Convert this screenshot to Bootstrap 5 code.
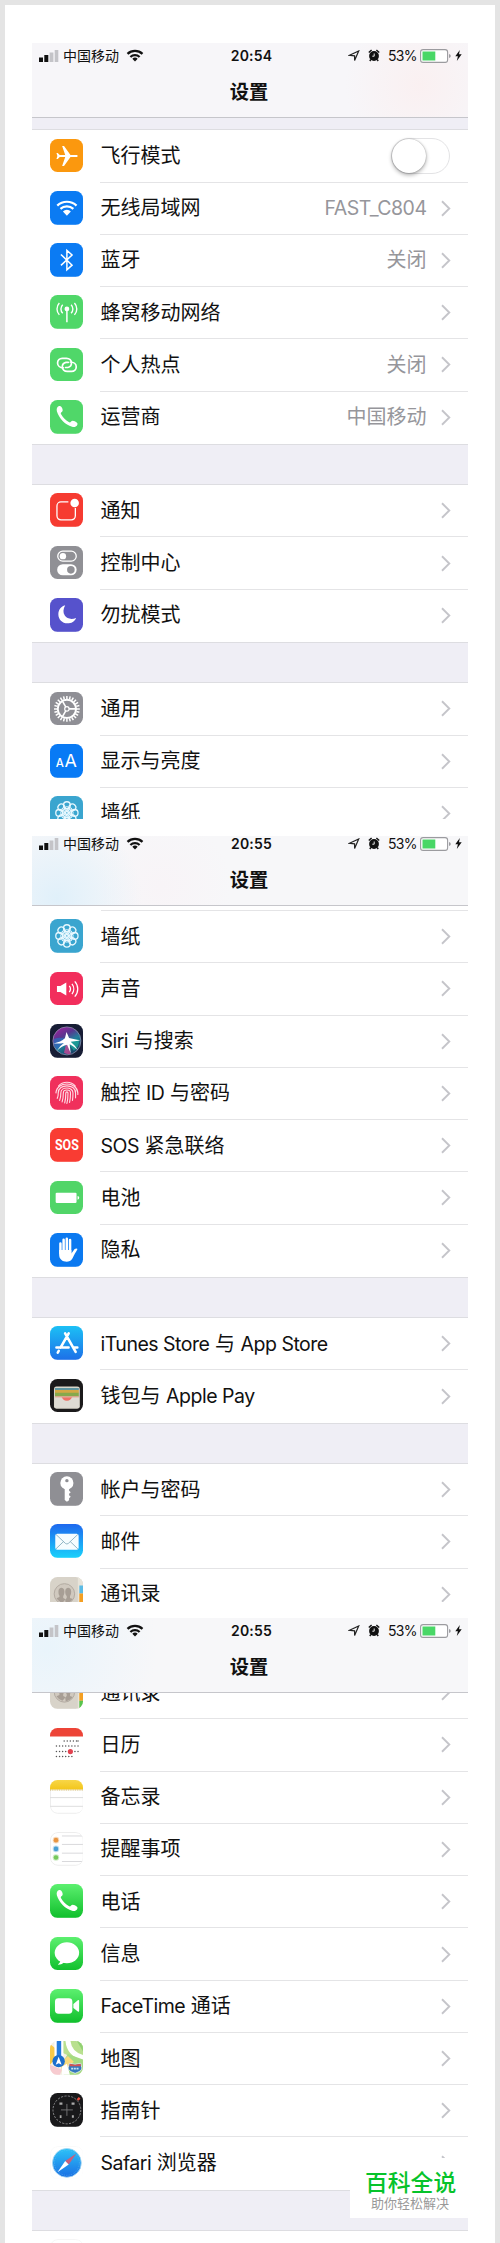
<!DOCTYPE html>
<html lang="zh-CN">
  <head>
    <meta charset="UTF-8" />
    <meta name="viewport" content="width=device-width, initial-scale=1.0" />
    <title>设置</title>
    <link
      href="https://cdn.jsdelivr.net/npm/bootstrap@5.3.0/dist/css/bootstrap.min.css"
      rel="stylesheet"
    />
    <style>
      body {
        font-family: "Inter", "Noto Sans CJK SC", sans-serif;
        color: #111;
        background-color: #fff;
      }
      .page-frame {
        height: 2243px;
        border: 5px solid #e4e4e4;
        border-bottom: 0;
        padding: 38px 27px 0;
      }
      .screen {
        flex: none;
        width: 436px;
        background-color: #fff;
      }
      .screen-1 {
        height: 776px;
        margin-bottom: 17px;
      }
      .screen-2 {
        height: 766px;
        margin-bottom: 16px;
      }
      .screen-3 {
        height: 625px;
      }

      /* header */
      .top-bar {
        flex: none;
        height: 75px;
        border-bottom: 1px solid #c6c6cb;
        z-index: 1;
      }
      .screen-1 .top-bar {
        background: radial-gradient(circle at 388px 42px, #faf0f1 0, rgba(247, 246, 249, 0) 75px), #f7f6f9;
      }
      .screen-2 .top-bar {
        height: 70px;
        background: radial-gradient(circle at 25px 62px, #e0f0fa 0, rgba(247, 247, 249, 0) 85px),
          radial-gradient(circle at 130px 50px, #f8f4f7 0, rgba(247, 247, 249, 0) 70px), #f7f7f9;
      }
      .screen-3 .top-bar {
        background: radial-gradient(circle at 15px 30px, #e9f4fb 0, rgba(247, 247, 249, 0) 110px), #f7f7f9;
      }
      .status-bar {
        height: 25px;
        padding: 0 6px 0 7px;
        font-size: 14px;
        line-height: 25px;
      }
      .screen-2 .status-bar {
        height: 20px;
        line-height: 15px;
      }
      .screen-2 .status-bar > div {
        height: 15px;
      }
      .status-bar > div {
        height: 25px;
      }
      .status-side {
        width: 160px;
      }
      .carrier {
        margin: 0 7px 0 4px;
      }
      .clock {
        font-weight: 600;
        font-size: 14px;
        letter-spacing: 0.2px;
        padding-left: 2px;
      }
      .percent {
        margin: 0 3px 0 8px;
        font-size: 14px;
        letter-spacing: -0.6px;
      }
      .bar-title {
        padding-right: 2px;
        font-size: 19.3px;
        font-weight: 600;
        line-height: 48px;
      }

      /* list */
      .gap-band {
        flex: none;
        height: 41.3px;
        background-color: #efeef5;
        border: solid #dddde1;
        border-width: 1px 0;
      }
      .gap-first {
        height: 12.3px;
        border-top: 0;
      }
      .gap-line {
        flex: none;
        height: 5px;
        margin-left: 69px;
        border-bottom: 1px solid #e4e4e6;
      }
      .group-list {
        flex: none;
      }
      .setting-row {
        height: 52.28px;
        padding-left: 17.7px;
      }
      .app-icon {
        flex: none;
        width: 33.8px;
        height: 33.8px;
        margin: -2px 17px 0 0;
        border-radius: 7.5px;
        overflow: hidden;
      }
      .row-body {
        height: 100%;
        padding-right: 17.5px;
        font-size: 20px;
        white-space: pre;
        border-bottom: 1px solid #e4e4e6;
      }
      .group-list .setting-row:last-child .row-body {
        border-bottom-color: transparent;
      }
      .row-value {
        color: #96969b;
        margin-right: 14px;
      }
      .latin {
        font-size: 19.5px;
        letter-spacing: -0.5px;
      }
      .toggle-track {
        width: 59px;
        height: 36px;
        margin-right: 1px;
        border: 1.5px solid #e3e3e5;
      }
      .toggle-knob {
        width: 34px;
        height: 34px;
        background-color: #fff;
        box-shadow: 0 2px 4px rgba(0, 0, 0, 0.32), 0 0 1.5px rgba(0, 0, 0, 0.35);
      }
      .tail-row {
        height: 12px;
      }
      .faded {
        opacity: 0.18;
      }

      /* site stamp over the last rows */
      .stamp {
        right: 32px;
        top: 2158px;
        width: 118px;
        height: 60px;
        padding: 11px 0 0 15px;
        background-color: #fff;
        z-index: 2;
      }
      .stamp-name {
        font-size: 22.8px;
        font-weight: 500;
        line-height: 27px;
        color: #06c32b;
      }
      .stamp-note {
        padding-left: 6px;
        font-size: 13px;
        line-height: 15px;
        color: #999;
      }
    </style>
  </head>
  <body>
    <svg width="0" height="0" class="position-absolute">
      <defs>
        <linearGradient id="gGreen" x2="0" y2="1"><stop stop-color="#5cf06f" /><stop offset="1" stop-color="#10bf2c" /></linearGradient>
        <linearGradient id="gStore" x2="0" y2="1"><stop stop-color="#1cc0f5" /><stop offset="1" stop-color="#1d70e8" /></linearGradient>
        <linearGradient id="gMail" x2="0" y2="1"><stop stop-color="#1e68ee" /><stop offset="1" stop-color="#1ad1fb" /></linearGradient>
        <linearGradient id="gSafari" x2="0" y2="1"><stop stop-color="#2cc3f8" /><stop offset="1" stop-color="#1a6fe4" /></linearGradient>
        <linearGradient id="gNotes" x2="0" y2="1"><stop stop-color="#f8d648" /><stop offset="1" stop-color="#f3c61b" /></linearGradient>
        <linearGradient id="gSiri" x2=".6" y2="1"><stop stop-color="#b01da0" /><stop offset=".4" stop-color="#5a3590" /><stop offset=".65" stop-color="#217f9b" /><stop offset="1" stop-color="#184267" /></linearGradient>
      </defs>
    </svg>

    <div class="page-frame d-flex flex-column" id="page"></div>

    <div class="stamp position-absolute">
      <div class="stamp-name">百科全说</div>
      <div class="stamp-note">助你轻松解决</div>
    </div>

    <script src="https://cdn.jsdelivr.net/npm/bootstrap@5.3.0/dist/js/bootstrap.bundle.min.js"></script>
    <script>
      const handset =
        '<path fill="#fff" d="M8.6 6.4c1.8-.9 3 .1 3.8 2.2.8 2.2.3 3.1-1.2 4.1-.6.5-.4 1.1.1 2 1.9 3.4 4.3 5.7 7.6 7.5 1 .5 1.5.5 2.1-.3.9-1.3 2.1-1.5 4-.5 2.4 1.2 3.3 2.3 2.3 3.9-1 1.6-2.9 2.1-5.1 1.5C15.400 25 8.900 18.200 6.900 11.200c-.5-2 .1-4 1.700-4.800z"/>';

      // petals and gear teeth are generated around the centre of the tile
      function around(count, shape) {
        let out = "";
        for (let i = 0; i < count; i++) {
          out += `<g transform="rotate(${(360 / count) * i} 17 17)">${shape}</g>`;
        }
        return out;
      }

      function dots(cols, y) {
        return cols.map((c) => `<circle cx="${6.5 + c * 3.1}" cy="${y}" r=".75"/>`).join("");
      }

      // name: [tile colour, drawing, outline for the white tiles]
      const icons = {
        plane: ["#fb980e", '<path fill="#fff" d="M6.500 14.200h1.300l2 1.900h5.500L12.200 7h1.900l6.500 9.100h5.600c2.300 0 2.300 2 0 2h-5.600l-6.500 9.100h-1.900l3.100-9.100H9.800l-2 1.900H6.500l.9-2.900z"/>'],
        wifi: ["#0b7bf3", '<g fill="none" stroke="#fff" stroke-width="2.200"><path d="M7.300 14.700a14 14 0 0 1 19.400 0M10.500 18a9.400 9.400 0 0 1 13 0"/></g><path fill="#fff" d="M13 20.500a5.700 5.700 0 0 1 8 0l-4 4.300z"/>'],
        bluetooth: ["#0b7bf3", '<path fill="none" stroke="#fff" stroke-width="1.500" d="M11 11.500l11.200 10.800-5.200 4.700V7.500l5.200 4.600L11 22.500"/>'],
        cell: ["#50d769", '<circle cx="17" cy="14" r="2.400" fill="#fff"/><path d="M17 14v13.500" stroke="#fff" stroke-width="1.500"/><g fill="none" stroke="#fff" stroke-width="1.400"><path d="M12.800 18.300a6 6 0 0 1 0-8.600M21.200 18.300a6 6 0 0 0 0-8.600M9.400 20a8.800 8.800 0 0 1 0-12M24.600 20a8.800 8.800 0 0 0 0-12"/></g>'],
        hotspot: ["#50d769", '<g fill="none" stroke="#fff" stroke-width="1.700" stroke-linecap="round"><path d="M13.300 19.900c-3.200 0-5.700-2-5.700-4.800 0-2.600 2-4.700 4.700-4.700h4.300c3 0 5 2 5 4.700 0 2.300-1.500 4-3.700 4.500h-2.300"/><path d="M20.500 14.100c3.400 0 5.900 2 5.900 4.800 0 2.600-2 4.700-4.700 4.700h-4.300c-3 0-5-2-5-4.700 0-2.300 1.500-4 3.700-4.500h2.300"/></g>'],
        carrier: ["#50d769", handset],
        notice: ["#f63b31", '<path fill="none" stroke="#fff" stroke-width="1.300" d="M18.500 9H11a4 4 0 0 0-4 4v10a4 4 0 0 0 4 4h10.500a4 4 0 0 0 4-4v-8"/><circle cx="24.800" cy="10" r="4.300" fill="#fff"/>'],
        control: ["#909095", '<rect x="7.800" y="5.200" width="18.600" height="10" rx="5" fill="none" stroke="#fff" stroke-width="1.300"/><circle cx="13" cy="10.200" r="3.200" fill="#fff"/><rect x="7.200" y="18.300" width="19.600" height="11.200" rx="5.600" fill="#fff"/><circle cx="21" cy="24" r="3.800" fill="#909095"/>'],
        moon: ["#5652cc", '<path fill="#fff" d="M15.300 7.300c-4.300 1.200-6.900 4.800-6.900 9 0 5.200 3.900 9.200 9.100 9.200 4 0 7.400-2.100 8.800-5.500-4.800 2-9.200.9-11.400-2.300-2-3-1.700-6.800.4-10.400z"/>'],
        gear: ["#8f8f95", around(24, '<path d="M17 4v3.200" stroke="#fff" stroke-width="1.500"/>') + '<circle cx="17" cy="17" r="9.200" fill="none" stroke="#fff" stroke-width="2"/>' + around(3, '<path d="M19 17h7.500" stroke="#fff" stroke-width="1.600"/>') + '<circle cx="17" cy="17" r="2.200" fill="none" stroke="#fff" stroke-width="1.200"/>'],
        display: ["#087af5", '<g fill="#fff" font-family="Inter, sans-serif"><text x="5.700" y="23" font-size="11.500" font-weight="500">A</text><text x="14.700" y="23" font-size="18">A</text></g>'],
        wallpaper: ["#3aa5cf", '<g fill="none" stroke="#e8f8ff" stroke-width="1.300">' + around(8, '<circle cx="17" cy="9.200" r="3.400"/><ellipse cx="17" cy="13.200" rx="2" ry="2.500" stroke-width="1"/>') + '<circle cx="17" cy="17" r="1.500"/></g>'],
        sound: ["#f22e5c", '<path fill="#fff" d="M7 14.200h3.400l6-3.700v13.200l-6-3.700H7z"/><g fill="none" stroke="#fff" stroke-width="1.300"><path d="M19.400 14a5 5 0 0 1 0 6.200M22.100 11.900a8.500 8.500 0 0 1 0 10.400M24.900 9.400c4 4.200 4 11.200 0 15.400"/></g>'],
        siri: ["#171d35", '<circle cx="17" cy="17" r="14.100" fill="url(#gSiri)" stroke="#9b9cb8" stroke-width=".7"/><path d="M4 15q9-3 13 2L7 26q-4-5-3-11z" fill="#2c6fc0" opacity=".7"/><path d="M17 17l12-2q1 8-5 12z" fill="#1ba999" opacity=".75"/><path d="M17 17l4 13q-4 1-7-1z" fill="#e0469d" opacity=".7"/><path fill="#fff" d="M3.500 19.500Q11 18 15 14.300L16.600 8l2.600 6.200 11.300 2.300-9.700 1.300q4.200 3.200 7.200 8.700-4.800-4.800-8.200-6.200l1 9.200-3.600-8.500q-5.200 1-10.200 6 3.200-5.700 7-8-4.500 1-10.500.5z"/>'],
        touch: ["#f0305c", '<g fill="none" stroke="#ffdbe4" stroke-width="1.150" stroke-linecap="round"><path d="M8.500 10.200c4.200-5.200 12.800-5.200 17 0"/><path d="M6 17c.7-12 21.300-12 22 0v1.500"/><path d="M7.300 22.500c.8-1.700 1-3.500 1-5.500 0-9.500 17.400-9.500 17.400 0v5"/><path d="M9.700 24.500c1-2.500 1.200-4.800 1.200-7.500 0-6.600 12.200-6.600 12.200 0 0 3-.1 5-.5 7.500"/><path d="M12.200 26c1-3 1.200-5.500 1.200-9 0-3.900 7.200-3.900 7.200 0 0 4-.2 6.500-.9 9.500"/><path d="M14.800 27c1-3.500 1.100-6.500 1.100-10 0-1.300 2.200-1.300 2.200 0 0 4-.2 7-1.100 10.500"/></g>'],
        sos: ["#f93c33", '<text x="17" y="21.900" text-anchor="middle" fill="#fff" font-family="Roboto, sans-serif" font-size="14.500" font-weight="700" textLength="24" lengthAdjust="spacingAndGlyphs">SOS</text>'],
        battery: ["#51d568", '<rect x="5.700" y="11.700" width="21" height="10.400" rx="1.200" fill="#fff"/><path fill="#fff" d="M27.700 15q1.700.3 1.700 1.900t-1.700 1.900z"/>'],
        hand: ["#0b79f0", '<g stroke="#fff" stroke-width="2.500" stroke-linecap="round"><path d="M10.500 10.500V20M13.700 6.800V18M16.900 5.700V18M20.200 7V20"/></g><path fill="#fff" d="M9.200 17.200h12.300v3.300l3.300-4.300c1-1 2.700-.8 2.800-.2.100.6-2.500 4.200-3.700 7-1.500 3.900-3.300 6-7 6-4.500 0-7.700-2.700-7.700-7z"/>'],
        store: ["url(#gStore)", '<g stroke="#fff" stroke-width="2.600" stroke-linecap="round"><path d="M15.200 7.500L25.800 26M18.800 7.500L10.600 21.700M8.800 25l-1 1.700M6.500 21.700h12.200M23.500 21.700h4"/></g>'],
        wallet: ["#1b1a1b", '<rect x="4" y="7.500" width="26" height="22.500" rx="2.500" fill="#d9d6ca"/><path d="M5 9h24v2H5z" fill="#5f95a0"/><path d="M5 11h24v3H5z" fill="#d3a845"/><path d="M5 13.800h24v3.700H5z" fill="#86a94c"/><path d="M5 17.300h24v1.500H5z" fill="#e3a08c"/><path d="M4.700 18.600h6.500c2 0 2.500 3.400 5.800 3.400s3.800-3.400 5.800-3.400h6.500V29H4.700z" fill="#dfdcd4"/><path d="M12 18.600h10c-1 1.500-2 3.400-5 3.400s-4-1.900-5-3.400z" fill="#f07166"/>'],
        key: ["#8f8f94", '<circle cx="17" cy="11" r="6.600" fill="#fff"/><circle cx="17" cy="8.700" r="1.700" fill="#8f8f94"/><path fill="#fff" d="M14.800 16h4.400v2.800l1.700 1.500-1.700 1.500v1.500l1.700 1.500-1.700 1.700v1.800L17 30l-2.200-1.800z"/>'],
        mail: ["url(#gMail)", '<rect x="5.300" y="9.800" width="23.500" height="16" rx="2" fill="#f6fdff"/><path fill="none" stroke="#86aebf" stroke-width=".9" d="M6 10.500l9.500 9q1.500 1.300 3 0l9.500-9M6 25l7.800-7.500M28 25l-7.800-7.500"/>'],
        contacts: ["#d8d3c9", '<path fill="#e8e4da" d="M28 0h6v34h-6z"/><path fill="#5cbbe5" d="M29.500 8.500H34v8h-4.500z"/><path fill="#f49f22" d="M29.500 16.500H34v9.500h-4.500z"/><path fill="#58c44d" d="M29.500 26H34v8h-4.500z"/><circle cx="14.500" cy="17" r="10.300" fill="#d0c9bf" stroke="#b2aaa1"/><path fill="#a79e95" d="M8.500 14.500c0-5 6-5 6 0 0 2.200-.5 3.800-1.200 4.500v2.200l2.400 1.200-3.200 3.500q-3.500-.7-6-4.500l3-1.200v-1.500c-.7-.8-1-2.200-1-4.200z"/><path fill="#a79e95" d="M15.300 14.500c0-5 6-5 6 0 0 2.200-.5 3.800-1.200 4.500v2.200l2.700 1q-3 4-7 4.200l-.5-3.500 1.500-1.700v-2.200c-1-.8-1.500-2.400-1.500-4.500z"/>'],
        calendar: ["#fff", '<path fill="#ed4437" d="M0 0h34v8.500H0z"/><g fill="#555">' + dots([2.5, 3.5, 4.5, 5.5, 6.5, 7], 13) + dots([0, 1, 2, 3, 4, 5, 6, 7], 18.2) + dots([0, 1, 2, 3, 6, 7], 23.7) + dots([0, 1, 2, 3, 4, 5], 28.7) + '</g><circle cx="20.500" cy="23.700" r="2.600" fill="#e24350"/>', "none"],
        notes: ["#fff", '<path fill="none" stroke="#ededed" d="M.5 9v17.500a7 7 0 0 0 7 7h19a7 7 0 0 0 7-7V9"/><path fill="url(#gNotes)" d="M0 0h34v9.500H0z"/><path d="M0 10.100h34" stroke="#c6a84d" stroke-dasharray="1 .8" stroke-width=".8"/><path d="M0 17.700h34M0 26.500h34" stroke="#dedede"/>'],
        reminders: ["#fff", '<path d="M12 4h22M12 12.500h22M12 21.300h22M12 29.700h22" stroke="#d9d9dc"/><g stroke-opacity=".35" stroke-width="2"><circle cx="6" cy="8.200" r="2.300" fill="#e99643" stroke="#e99643"/><circle cx="6" cy="17" r="2.300" fill="#499fd5" stroke="#499fd5"/><circle cx="6" cy="25.700" r="2.300" fill="#76c95b" stroke="#76c95b"/></g>', "#ededed"],
        phone: ["url(#gGreen)", handset],
        messages: ["url(#gGreen)", '<ellipse cx="17" cy="15.900" rx="12.300" ry="10.500" fill="#fff"/><path fill="#fff" d="M10.500 23c.2 2-1 3.700-2.700 4.800 3.300 0 5.400-1.300 6.700-3z"/>'],
        facetime: ["url(#gGreen)", '<rect x="5" y="9.300" width="17.500" height="15.500" rx="3.500" fill="#fff"/><path fill="#fff" d="M23.500 15l4.500-3.700q1.300-.8 1.300.7v10q0 1.500-1.300.7L23.500 19z"/>'],
        maps: ["#f4f0e4", '<path fill="#f9c947" d="M0 3l5 4v11l-5 6z"/><path fill="#b9e08f" d="M13 0h21v22L13 12z"/><path fill="#92d273" d="M27 0h7v12z"/><path fill="none" stroke="#fff" stroke-width="5" d="M18-1q1 15 17 18"/><path fill="#a5db83" d="M18 13l16 6v15H14l-3-10z"/><path fill="#f7d97c" d="M11 22l7-7 6 6-12 11z"/><path fill="#f7cbd0" d="M0 24l12 5-2 5H0z"/><path fill="#fff" d="M4.500 0h9v18h-9zM12 26l5-3 3 11h-8z"/><path stroke="#247bdd" stroke-width="4.500" d="M9 0v18"/><circle cx="8.700" cy="20.300" r="6.200" fill="#1c6fcd"/><path fill="#fff" d="M8.700 15.800l3 8-3-1.500-3 1.500z"/><path fill="#3478bd" stroke="#edf2f4" stroke-width=".8" d="M19.500 22.500q5.500 2 11.500 0l1 4.500c0 3-3.500 4.200-6.700 5.500-3.500-1.300-7-2.500-7-5.500z"/><path fill="#d35353" d="M20 23q5 1.600 10.700 0l.5 2.300H19.500z"/><path stroke="#c9e2f1" stroke-width="1.800" stroke-dasharray="2 .7" d="M21.300 27.700h8"/>'],
        compass: ["#19191b", '<circle cx="17" cy="17" r="14" fill="none" stroke="#909092" stroke-width=".9" stroke-dasharray="2.200 1.300"/><path d="M17 11v12M11 17h12" stroke="#78787a" stroke-width=".9"/><g fill="#aaa"><path d="M9.500 9.500h3v2.300h-3zM21.700 9.500h3v2.300h-3zM9.800 22.500h1.800v2.700H9.800zM22 22.300h2V25h-2z"/></g><path fill="#ee5141" d="M26.800 6.300l2.200-2.300 1.700 1.700-2.200 2z"/>'],
        safari: ["#fff", '<circle cx="17" cy="17" r="14.500" fill="url(#gSafari)" stroke="#a6d6f2" stroke-width=".8"/><circle cx="17" cy="17" r="12.500" fill="none" stroke="#6fc4f2" stroke-width=".7" stroke-dasharray=".6 1.200"/><path fill="#c9607c" d="M26.500 7.500L15.300 15l3.500 3.700z"/><path fill="#fff" d="M7.500 26.500L15.300 15l3.500 3.700z"/>', "#fafafa"],
        news: ["#fff", '<path fill="#ea5584" d="M14 9c1-4 8-5 11-1l-5 8z"/>', "#ccc"],
      };

      const chevron =
        '<svg width="10" height="17" viewBox="0 0 10 17" class="flex-shrink-0"><path d="M1 1.300l7.300 7.200L1 15.700" fill="none" stroke="#c5c5ca" stroke-width="1.900"/></svg>';

      function appIcon(name) {
        const [bg, art, edge] = icons[name];
        const outline = edge
          ? `<rect x=".5" y=".5" width="33" height="33" rx="7.500" fill="none" stroke="${edge}"/>`
          : "";
        return `<svg class="app-icon" viewBox="0 0 34 34"><rect width="34" height="34" fill="${bg}"/>${art}${outline}</svg>`;
      }

      // Latin runs are set a little tighter than the Chinese text
      function label(text) {
        return text.replace(/[A-Za-z_][A-Za-z0-9_ ]*[A-Za-z0-9]/g, '<span class="latin">$&</span>');
      }

      function row([icon, text, value]) {
        let end = chevron;
        if (value === "off") {
          end = '<div class="toggle-track rounded-pill d-flex align-items-center"><div class="toggle-knob rounded-circle"></div></div>';
        } else if (value) {
          end = `<span class="row-value">${label(value)}</span>` + chevron;
        }
        return `
          <div class="setting-row d-flex align-items-center">
            ${appIcon(icon)}
            <div class="row-body flex-grow-1 d-flex align-items-center">
              <span class="me-auto">${label(text)}</span>${end}
            </div>
          </div>`;
      }

      function group(rows) {
        return `<div class="group-list">${rows.map(row).join("")}</div>`;
      }

      function topBar(time) {
        return `
          <div class="top-bar">
            <div class="status-bar d-flex justify-content-between">
              <div class="status-side d-flex align-items-center">
                <svg width="20" height="12" viewBox="0 0 20 12"><path d="M0 7.500h4V12H0zM5.300 5h4v7h-4z" fill="#111"/><path d="M10.600 2.500h3.800V12h-3.800zM15.700 0h3.600v12h-3.600z" fill="#c4c4c8"/></svg>
                <span class="carrier">中国移动</span>
                <svg width="18" height="13" viewBox="0 0 18 13"><g fill="none" stroke="#111" stroke-width="2.300"><path d="M1.500 4.900a11 11 0 0 1 15 0M4.400 8a6.800 6.800 0 0 1 9.200 0"/></g><path d="M6.300 9.700a4 4 0 0 1 5.400 0L9 12.600z" fill="#111"/></svg>
              </div>
              <div class="clock d-flex align-items-center">${time}</div>
              <div class="status-side d-flex align-items-center justify-content-end">
                <svg width="12" height="12" viewBox="0 0 12 12"><path d="M1.500 5.300L10.700 1 6.600 10.600V5.800z" fill="none" stroke="#222" stroke-width="1.200"/></svg>
                <svg width="12" height="13" viewBox="0 0 12 13" class="ms-2"><circle cx="6" cy="7" r="4.900" fill="#111"/><path d="M.8 3.600L3.600 1M11.200 3.600L8.400 1M2.800 10.500l-1 1.500M9.200 10.500l1 1.500" stroke="#111" stroke-width="1.400"/><path d="M6.200 4.500v2.700H4.300" fill="none" stroke="#fff" stroke-width=".9"/></svg>
                <span class="percent">53%</span>
                <svg width="31" height="14" viewBox="0 0 31 14"><rect x=".6" y=".6" width="27" height="12.800" rx="2.500" fill="#fff" stroke="#9b9b9f" stroke-width="1.100"/><path d="M2.500 2.500h12.800v9H2.500z" fill="#49d766"/><path d="M29 5q1.800.3 1.800 2T29 9z" fill="#9b9b9f"/></svg>
                <svg width="7" height="11" viewBox="0 0 7 11" class="ms-1"><path d="M4.800 0L.3 6.200h2.600L1.800 11l4.900-6.700H4z" fill="#111"/></svg>
              </div>
            </div>
            <div class="bar-title text-center">设置</div>
          </div>`;
      }

      const gap = '<div class="gap-band"></div>';

      const screens = [
        topBar("20:54") +
          '<div class="gap-band gap-first"></div>' +
          group([
            ["plane", "飞行模式", "off"],
            ["wifi", "无线局域网", "FAST_C804"],
            ["bluetooth", "蓝牙", "关闭"],
            ["cell", "蜂窝移动网络"],
            ["hotspot", "个人热点", "关闭"],
            ["carrier", "运营商", "中国移动"],
          ]) +
          gap +
          group([
            ["notice", "通知"],
            ["control", "控制中心"],
            ["moon", "勿扰模式"],
          ]) +
          gap +
          group([
            ["gear", "通用"],
            ["display", "显示与亮度"],
            ["wallpaper", "墙纸"],
          ]),
        topBar("20:55") +
          '<div class="gap-line"></div>' +
          group([
            ["wallpaper", "墙纸"],
            ["sound", "声音"],
            ["siri", "Siri 与搜索"],
            ["touch", "触控 ID 与密码"],
            ["sos", "SOS 紧急联络"],
            ["battery", "电池"],
            ["hand", "隐私"],
          ]) +
          gap +
          group([
            ["store", "iTunes Store 与 App Store"],
            ["wallet", "钱包与 Apple Pay"],
          ]) +
          gap +
          group([
            ["key", "帐户与密码"],
            ["mail", "邮件"],
            ["contacts", "通讯录"],
          ]),
        // the list is scrolled, so its end is what shows under the header
        topBar("20:55") +
          '<div class="flex-grow-1 overflow-hidden d-flex flex-column justify-content-end">' +
          group([
            ["contacts", "通讯录"],
            ["calendar", "日历"],
            ["notes", "备忘录"],
            ["reminders", "提醒事项"],
            ["phone", "电话"],
            ["messages", "信息"],
            ["facetime", "FaceTime 通话"],
            ["maps", "地图"],
            ["compass", "指南针"],
            ["safari", "Safari 浏览器"],
          ]) +
          gap +
          `<div class="tail-row flex-shrink-0 overflow-hidden"><div class="setting-row d-flex align-items-center faded">${appIcon("news")}</div></div>` +
          "</div>",
      ];

      document.getElementById("page").innerHTML = screens
        .map((html, i) => `<div class="screen screen-${i + 1} d-flex flex-column overflow-hidden">${html}</div>`)
        .join("");
    </script>
  </body>
</html>
